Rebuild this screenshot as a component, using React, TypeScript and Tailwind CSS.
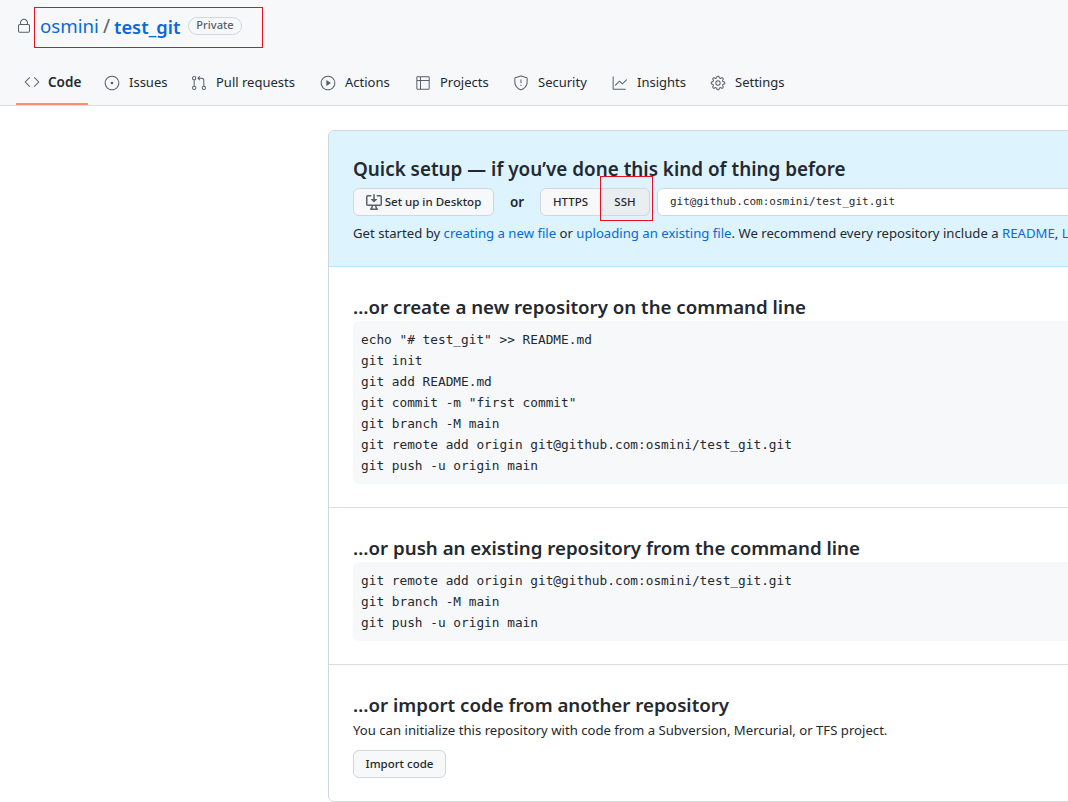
import React from "react";
import { GoLock, GoCode, GoIssueOpened, GoGitPullRequest, GoPlay, GoTable, GoShield, GoGraph, GoGear } from "react-icons/go";

const tabs = [
  { label: "Issues", Icon: GoIssueOpened, w: "w-[87px]" },
  { label: "Pull requests", Icon: GoGitPullRequest, w: "w-[129px]" },
  { label: "Actions", Icon: GoPlay, w: "w-[95px]" },
  { label: "Projects", Icon: GoTable, w: "w-[98px]" },
  { label: "Security", Icon: GoShield, w: "w-[99px]" },
  { label: "Insights", Icon: GoGraph, w: "w-[98px]" },
  { label: "Settings", Icon: GoGear, w: "w-[95px]" },
];

const Code = ({ lines, cls }: { lines: string[]; cls: string }) => (
  <pre className={`mr-6 bg-[#f6f8fa] rounded-md pl-2 text-[#24292f] text-[12.79px] leading-[21px] font-['DejaVu_Sans_Mono',monospace] ${cls}`}>
    {lines.join("\n")}
  </pre>
);

const DesktopDownload = () => (
  <svg width="16" height="16" viewBox="0 0 16 16" fill="#57606a" className="mr-[3px]">
    <path d="m4.927 5.427 2.896 2.896a.25.25 0 0 0 .354 0l2.896-2.896A.25.25 0 0 0 10.896 5H8.75V.75a.75.75 0 1 0-1.5 0V5H5.104a.25.25 0 0 0-.177.427Z" />
    <path d="M1.573 2.573a.25.25 0 0 0-.073.177v7.5a.25.25 0 0 0 .25.25h12.5a.25.25 0 0 0 .25-.25v-7.5a.25.25 0 0 0-.25-.25h-3a.75.75 0 0 1 0-1.5h3A1.75 1.75 0 0 1 16 2.75v7.5A1.75 1.75 0 0 1 14.25 12h-3.727c.099 1.041.52 1.872 1.292 2.757A.75.75 0 0 1 11.25 16h-6.5a.75.75 0 0 1-.565-1.243c.772-.885 1.192-1.716 1.292-2.757H1.75A1.75 1.75 0 0 1 0 10.25v-7.5A1.75 1.75 0 0 1 1.75 1h3a.75.75 0 0 1 0 1.5h-3a.25.25 0 0 0-.177.073ZM6.982 12a5.72 5.72 0 0 1-.765 2.5h3.566a5.72 5.72 0 0 1-.765-2.5H6.982Z" />
  </svg>
);

export default function App() {
  return (
    <div className="relative w-[1068px] h-[802px] overflow-hidden bg-white text-[#24292f] font-['Noto_Sans',sans-serif]">
      <header className="h-[106px] bg-[#f6f8fa] border-b border-[#d8dee4] flex flex-col pl-4">
        <div className="h-[66px] pb-[12px] flex items-center">
          <GoLock size={16} className="text-[#57606a] mr-[8px] -mt-[2px]" />
          <a className="text-[#0969da] text-[18.7px]">osmini</a>
          <span className="text-[#57606a] text-[19px] mx-[4px]">/</span>
          <a className="text-[#0969da] text-[18.3px] font-semibold">test_git</a>
          <span className="ml-2 -mt-[2px] h-[18px] px-[7px] flex items-center rounded-full border border-[#d0d7de] text-[#57606a] text-[11.1px] font-medium">Private</span>
        </div>
        <nav className="flex flex-1 text-[13px] text-[#24292f]">
          <div className="w-[72px] h-[40px] pl-2 pb-[4px] flex items-center gap-2 border-b-2 border-[#fd8c73] font-semibold text-[13.5px]">
            <GoCode size={16} className="text-[#57606a]" />
            <span>Code</span>
          </div>
          {tabs.map(({ label, Icon, w }) => (
            <div key={label} className={`${w} h-[40px] pl-4 pb-[4px] flex items-center gap-[9px]`}>
              <Icon size={16} className="text-[#57606a]" />
              <span>{label}</span>
            </div>
          ))}
        </nav>
      </header>

      <main className="pl-[328px] pt-6">
        <div className="w-[1000px] h-[672px] rounded-md border border-[#d0d7de] overflow-hidden">
          <section className="h-[137px] -mt-px -ml-px bg-[#ddf4ff] border border-[#b6e3ff] rounded-t-md pl-6 pt-[24px]">
            <h3 className="text-[18.85px] leading-[28px] font-semibold">Quick setup — if you’ve done this kind of thing before</h3>
            <div className="flex items-center h-[28px] mt-[5px]">
              <button className="h-[28px] w-[141px] flex items-center justify-center rounded-md border border-[#d0d7de] bg-[#f6f8fa] text-[11.5px] font-medium">
                <DesktopDownload />
                Set up in Desktop
              </button>
              <span className="w-[46px] text-center text-[13.5px] font-semibold">or</span>
              <div className="flex h-[28px] text-[11.5px] font-medium">
                <button className="w-[61px] rounded-l-md border border-[#d0d7de] bg-[#f6f8fa]">HTTPS</button>
                <button className="w-[49px] rounded-r-md border border-l-0 border-[#d0d7de] bg-[#ebeef1]">SSH</button>
              </div>
              <div className="ml-[7px] w-[600px] h-[28px] pl-3 pt-px flex items-center bg-white border border-[#d0d7de] rounded-l-md text-[11px] font-['DejaVu_Sans_Mono',monospace]">
                git@github.com:osmini/test_git.git
              </div>
            </div>
            <p className="mt-[7px] text-[13.15px] leading-[20px] whitespace-nowrap">
              Get started by <a className="text-[#0969da]">creating a new file</a> or <a className="text-[#0969da]">uploading an existing file</a>. We recommend every repository include a <a className="text-[#0969da]">README</a>, <a className="text-[#0969da]">LICENSE</a>, and <a className="text-[#0969da]">.gitignore</a>.
            </p>
          </section>

          <section className="h-[241px] border-b border-[#d8dee4] pl-6 pt-[26px]">
            <h3 className="text-[18.7px] leading-[28px] font-semibold">…or create a new repository on the command line</h3>
            <Code
              cls="mt-0 pt-[8px] h-[163px]"
              lines={[
                'echo "# test_git" >> README.md',
                "git init",
                "git add README.md",
                'git commit -m "first commit"',
                "git branch -M main",
                "git remote add origin git@github.com:osmini/test_git.git",
                "git push -u origin main",
              ]}
            />
          </section>

          <section className="h-[157px] border-b border-[#d8dee4] pl-6 pt-[26px]">
            <h3 className="text-[18.7px] leading-[28px] font-semibold">…or push an existing repository from the command line</h3>
            <Code
              cls="pt-[8px] h-[79px]"
              lines={[
                "git remote add origin git@github.com:osmini/test_git.git",
                "git branch -M main",
                "git push -u origin main",
              ]}
            />
          </section>

          <section className="pl-6 pt-[26px]">
            <h3 className="text-[18.7px] leading-[28px] font-semibold">…or import code from another repository</h3>
            <p className="text-[13.15px] leading-[20px] mt-[1px]">You can initialize this repository with code from a Subversion, Mercurial, or TFS project.</p>
            <button className="mt-[10px] w-[93px] h-[28px] rounded-md border border-[#d0d7de] bg-[#f6f8fa] text-[11.5px] font-medium">Import code</button>
          </section>
        </div>
      </main>

      <div className="absolute left-[34px] top-[7px] w-[229px] h-[41px] border border-[#e81123]" />
      <div className="absolute left-[600px] top-[176px] w-[53px] h-[45px] border border-[#e81123]" />
    </div>
  );
}
